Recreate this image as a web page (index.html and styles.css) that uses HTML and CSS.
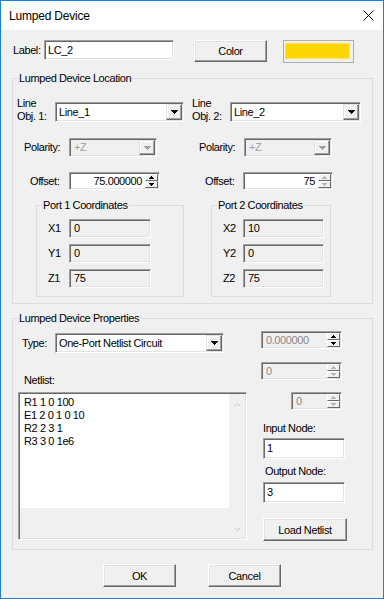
FILE: index.html
```html
<!DOCTYPE html>
<html>
<head>
<meta charset="utf-8">
<title>Lumped Device</title>
<link rel="stylesheet" href="styles.css">
</head>
<body>
<div class="window">
  <div class="titlebar">
    <span class="title">Lumped Device</span>
    <svg class="close" width="11" height="11" viewBox="0 0 11 11"><path d="M0.5 0.5L10.5 10.5M10.5 0.5L0.5 10.5" stroke="#000" stroke-width="1" fill="none"/></svg>
  </div>
  <div class="body">
    <div class="row-top">
      <span class="lbl lbl-label">Label:</span>
      <div class="edit edit-label">LC_2</div>
      <div class="btn btn-color">Color</div>
      <div class="swatch"><div class="swatch-fill"></div></div>
    </div>

    <fieldset class="group group-loc">
      <legend>Lumped Device Location</legend>
      <div class="loc-inner">
        <div class="row row-line">
          <span class="lbl2 lbl-obj1">Line<br>Obj. 1:</span>
          <div class="combo combo-obj1">
            <span class="combo-text">Line_1</span>
            <span class="combo-btn"><svg width="7" height="4" viewBox="0 0 7 4"><path d="M0 0H7V1H6V2H5V3H4V4H3V3H2V2H1V1H0Z" fill="#000"/></svg></span>
          </div>
          <span class="lbl2 lbl-obj2">Line<br>Obj. 2:</span>
          <div class="combo combo-obj2">
            <span class="combo-text">Line_2</span>
            <span class="combo-btn"><svg width="7" height="4" viewBox="0 0 7 4"><path d="M0 0H7V1H6V2H5V3H4V4H3V3H2V2H1V1H0Z" fill="#000"/></svg></span>
          </div>
        </div>

        <div class="row row-pol">
          <span class="lbl lbl-pol1">Polarity:</span>
          <div class="combo combo-dis combo-pol">
            <span class="combo-text">+Z</span>
            <span class="combo-btn"><svg width="7" height="4" viewBox="0 0 7 4"><path d="M0 0H7V1H6V2H5V3H4V4H3V3H2V2H1V1H0Z" fill="#a0a0a0"/></svg></span>
          </div>
          <span class="lbl lbl-pol2">Polarity:</span>
          <div class="combo combo-dis combo-pol">
            <span class="combo-text">+Z</span>
            <span class="combo-btn"><svg width="7" height="4" viewBox="0 0 7 4"><path d="M0 0H7V1H6V2H5V3H4V4H3V3H2V2H1V1H0Z" fill="#a0a0a0"/></svg></span>
          </div>
        </div>

        <div class="row row-off">
          <span class="lbl lbl-off1">Offset:</span>
          <div class="spin spin-off1">
            <span class="spin-text">75.000000</span>
            <span class="spin-btns">
              <span class="sb"><svg width="5" height="3" viewBox="0 0 5 3"><path d="M2 0H3V1H4V2H5V3H0V2H1V1H2Z" fill="#000"/></svg></span>
              <span class="sb"><svg width="5" height="3" viewBox="0 0 5 3"><path d="M0 0H5V1H4V2H3V3H2V2H1V1H0Z" fill="#000"/></svg></span>
            </span>
          </div>
          <span class="lbl lbl-off2">Offset:</span>
          <div class="spin spin-off2">
            <span class="spin-text">75</span>
            <span class="spin-btns">
              <span class="sb"><svg width="5" height="3" viewBox="0 0 5 3"><path d="M2 0H3V1H4V2H5V3H0V2H1V1H2Z" fill="#b4b4b4"/></svg></span>
              <span class="sb"><svg width="5" height="3" viewBox="0 0 5 3"><path d="M0 0H5V1H4V2H3V3H2V2H1V1H0Z" fill="#b4b4b4"/></svg></span>
            </span>
          </div>
        </div>

        <div class="row row-ports">
          <fieldset class="group port port1">
            <legend>Port 1 Coordinates</legend>
            <div class="port-inner">
              <div class="prow"><span class="lbl plbl">X1</span><div class="ro ro1">0</div></div>
              <div class="prow"><span class="lbl plbl">Y1</span><div class="ro ro1">0</div></div>
              <div class="prow"><span class="lbl plbl">Z1</span><div class="ro ro1">75</div></div>
            </div>
          </fieldset>
          <fieldset class="group port port2">
            <legend>Port 2 Coordinates</legend>
            <div class="port-inner">
              <div class="prow"><span class="lbl plbl">X2</span><div class="ro ro2">10</div></div>
              <div class="prow"><span class="lbl plbl">Y2</span><div class="ro ro2">0</div></div>
              <div class="prow"><span class="lbl plbl">Z2</span><div class="ro ro2">75</div></div>
            </div>
          </fieldset>
        </div>
      </div>
    </fieldset>

    <fieldset class="group group-props">
      <legend>Lumped Device Properties</legend>
      <div class="props-inner">
        <div class="props-left">
          <div class="row row-type">
            <span class="lbl lbl-type">Type:</span>
            <div class="combo combo-type">
              <span class="combo-text">One-Port Netlist Circuit</span>
              <span class="combo-btn"><svg width="7" height="4" viewBox="0 0 7 4"><path d="M0 0H7V1H6V2H5V3H4V4H3V3H2V2H1V1H0Z" fill="#000"/></svg></span>
            </div>
          </div>
          <div class="lbl lbl-netlist">Netlist:</div>
          <div class="netlist">
            <div class="net-main">
              <div class="net-white">R1 1 0 100<br>E1 2 0 1 0 10<br>R2 2 3 1<br>R3 3 0 1e6</div>
            </div>
            <div class="net-scroll">
              <svg width="7" height="4" viewBox="0 0 7 4"><path d="M0.5 3.5L3.5 0.5L6.5 3.5" stroke="#c8c8c8" fill="none"/></svg>
              <svg width="7" height="4" viewBox="0 0 7 4"><path d="M0.5 0.5L3.5 3.5L6.5 0.5" stroke="#c8c8c8" fill="none"/></svg>
            </div>
          </div>
        </div>
        <div class="props-right">
          <div class="spin spin-dis spin-r1">
            <span class="spin-text spin-left">0.000000</span>
            <span class="spin-btns">
              <span class="sb"><svg width="5" height="3" viewBox="0 0 5 3"><path d="M2 0H3V1H4V2H5V3H0V2H1V1H2Z" fill="#000"/></svg></span>
              <span class="sb"><svg width="5" height="3" viewBox="0 0 5 3"><path d="M0 0H5V1H4V2H3V3H2V2H1V1H0Z" fill="#000"/></svg></span>
            </span>
          </div>
          <div class="spin spin-dis spin-r2">
            <span class="spin-text spin-left">0</span>
            <span class="spin-btns">
              <span class="sb"><svg width="5" height="3" viewBox="0 0 5 3"><path d="M2 0H3V1H4V2H5V3H0V2H1V1H2Z" fill="#b4b4b4"/></svg></span>
              <span class="sb"><svg width="5" height="3" viewBox="0 0 5 3"><path d="M0 0H5V1H4V2H3V3H2V2H1V1H0Z" fill="#b4b4b4"/></svg></span>
            </span>
          </div>
          <div class="spin spin-dis spin-r3">
            <span class="spin-text spin-left">0</span>
            <span class="spin-btns">
              <span class="sb"><svg width="5" height="3" viewBox="0 0 5 3"><path d="M2 0H3V1H4V2H5V3H0V2H1V1H2Z" fill="#b4b4b4"/></svg></span>
              <span class="sb"><svg width="5" height="3" viewBox="0 0 5 3"><path d="M0 0H5V1H4V2H3V3H2V2H1V1H0Z" fill="#b4b4b4"/></svg></span>
            </span>
          </div>
          <div class="lbl lbl-in">Input Node:</div>
          <div class="edit edit-node edit-in">1</div>
          <div class="lbl lbl-out">Output Node:</div>
          <div class="edit edit-node edit-out">3</div>
          <div class="btn btn-load">Load Netlist</div>
        </div>
      </div>
    </fieldset>

    <div class="row-buttons">
      <div class="btn btn-dlg btn-ok">OK</div>
      <div class="btn btn-dlg btn-cancel">Cancel</div>
    </div>
  </div>
</div>
</body>
</html>
```

FILE: styles.css
```css
* { box-sizing: border-box; }
html, body { margin: 0; padding: 0; }
body {
  width: 384px;
  height: 599px;
  overflow: hidden;
  background: #f0f0f0;
  font-family: "Liberation Sans", Arial, sans-serif;
  font-size: 11px;
  letter-spacing: -0.4px;
  color: #000;
}
.window {
  width: 384px;
  height: 599px;
  border: 1px solid #1c7fd9;
  background: #f0f0f0;
  display: flex;
  flex-direction: column;
}
.titlebar {
  flex: none;
  height: 29px;
  background: #fff;
  display: flex;
  align-items: center;
  justify-content: space-between;
  padding: 0 9px 0 8px;
}
.title { font-size: 12px; letter-spacing: -0.2px; margin-top: 1px; }
.close { display: block; }
.body { flex: 1; display: flex; flex-direction: column; }

/* generic */
.lbl { display: block; white-space: nowrap; line-height: 13px; }
.row { display: flex; align-items: flex-start; }

.edit {
  background: #fff;
  border-top: 1px solid #a0a0a0;
  border-left: 1px solid #a0a0a0;
  border-right: 1px solid #fff;
  border-bottom: 1px solid #fff;
  box-shadow: inset 1px 1px 0 #696969, inset -1px -1px 0 #e3e3e3;
  padding-left: 3px;
  white-space: nowrap;
}
.btn {
  background: #f0f0f0;
  border-top: 1px solid #fff;
  border-left: 1px solid #fff;
  border-right: 1px solid #696969;
  border-bottom: 1px solid #696969;
  box-shadow: inset -1px -1px 0 #a0a0a0, inset 1px 1px 0 #e3e3e3;
  display: flex;
  align-items: center;
  justify-content: center;
}

/* top row */
.row-top {
  display: flex;
  align-items: flex-start;
  margin-top: 10px;
  padding-left: 12px;
  height: 23px;
  flex: none;
}
.lbl-label { width: 31px; line-height: 20px; }
.edit-label { width: 130px; height: 20px; line-height: 18px; }
.btn-color { margin-left: 20px; width: 73px; height: 22px; }
.swatch {
  margin-left: 16px;
  width: 71px;
  height: 23px;
  border: 1px solid #adadad;
  padding: 2px 3px 3px 1px;
  background: #f0f0f0;
}
.swatch-fill { width: 100%; height: 100%; background: #ffd700; border: 1px solid #ffe14d; }

/* group boxes */
.group {
  margin: 0;
  padding: 0;
  min-width: 0;
  border: 1px solid #dcdcdc;
}
.group > legend {
  margin-left: 5px;
  padding: 0 1px;
  line-height: 13px;
  font-size: 11px;
}
.group-loc { margin: 9px 0 0 11px; width: 361px; flex: none; }
.loc-inner { padding: 12px 0 6px 0; }

.lbl2 { display: block; line-height: 13px; white-space: nowrap; }
.row-line { height: 26px; padding-left: 4px; }
.lbl-obj1 { width: 38px; }
.lbl-obj2 { width: 38px; margin-left: 8px; }

.combo {
  display: flex;
  height: 20px;
  margin-top: 5px;
  background: #fff;
  border-top: 1px solid #a0a0a0;
  border-left: 1px solid #a0a0a0;
  border-right: 1px solid #fff;
  border-bottom: 1px solid #fff;
  box-shadow: inset 1px 1px 0 #696969, inset -1px -1px 0 #e3e3e3;
  padding: 1px;
}
.combo-obj1 { width: 129px; }
.combo-obj2 { width: 131px; }
.combo-text { flex: 1; padding-left: 2px; line-height: 16px; white-space: nowrap; overflow: hidden; }
.combo-btn {
  width: 16px;
  background: #f0f0f0;
  border-top: 1px solid #e3e3e3;
  border-left: 1px solid #e3e3e3;
  border-right: 1px solid #696969;
  border-bottom: 1px solid #696969;
  box-shadow: inset -1px -1px 0 #a0a0a0, inset 1px 1px 0 #fff;
  display: flex;
  align-items: center;
  justify-content: center;
}
.combo-btn svg { display: block; }
.combo-dis { background: #f0f0f0; color: #a0a0a0; }

.row-pol { margin-top: 15px; height: 19px; padding-left: 11px; }
.row-pol .lbl { line-height: 19px; }
.lbl-pol1 { width: 45px; }
.lbl-pol2 { width: 45px; margin-left: 42px; }
.combo-pol { width: 88px; height: 19px; margin-top: 0; }
.combo-pol .combo-text { line-height: 15px; padding-left: 3px; }

.row-off { margin-top: 15px; height: 18px; padding-left: 17px; }
.row-off .lbl { line-height: 18px; }
.lbl-off1 { width: 39px; }
.lbl-off2 { width: 38px; margin-left: 45px; }

.spin {
  display: flex;
  height: 18px;
  background: #fff;
  border-top: 1px solid #a0a0a0;
  border-left: 1px solid #a0a0a0;
  border-right: 1px solid #fff;
  border-bottom: 1px solid #fff;
  box-shadow: inset 1px 1px 0 #696969, inset -1px -1px 0 #e3e3e3;
  padding: 1px 1px 1px 1px;
}
.spin-text { flex: 1; text-align: right; padding-right: 3px; line-height: 14px; white-space: nowrap; }
.spin-left { text-align: left; padding-left: 3px; }
.spin-btns { width: 13px; display: flex; flex-direction: column; }
.sb {
  flex: 1;
  background: #f0f0f0;
  border-top: 1px solid #fff;
  border-left: 1px solid #fff;
  border-right: 1px solid #696969;
  border-bottom: 1px solid #696969;
  display: flex;
  align-items: center;
  justify-content: center;
}
.sb svg { display: block; }
.spin-off1 { width: 91px; }
.spin-off2 { width: 90px; }
.spin-dis { background: #f0f0f0; color: #8a8a8a; }

.row-ports { margin-top: 9px; }
.port { flex: none; }
.port1 { margin-left: 23px; width: 148px; }
.port2 { margin-left: 27px; width: 120px; }
.port-inner { padding: 7px 0 8px 11px; display: flex; flex-direction: column; gap: 6px; }
.prow { display: flex; align-items: center; height: 19px; }
.plbl { width: 21px; line-height: 19px; }
.port2 .plbl { width: 20px; }
.ro {
  height: 19px;
  line-height: 17px;
  background: #f0f0f0;
  border-top: 1px solid #a0a0a0;
  border-left: 1px solid #a0a0a0;
  border-right: 1px solid #fff;
  border-bottom: 1px solid #fff;
  box-shadow: inset 1px 1px 0 #696969, inset -1px -1px 0 #e3e3e3;
  padding-left: 4px;
}
.ro1 { width: 82px; }
.ro2 { width: 81px; }

/* properties */
.group-props { margin: 8px 0 0 11px; width: 361px; flex: none; }
.props-inner { display: flex; padding: 0 0 8px 0; }
.props-left { width: 234px; flex: none; }
.row-type { margin-top: 8px; height: 20px; padding-left: 9px; }
.lbl-type { width: 33px; line-height: 20px; }
.combo-type { width: 169px; margin-top: 0; }
.lbl-netlist { margin: 21px 0 0 11px; }
.netlist {
  margin: 5px 0 0 5px;
  width: 229px;
  height: 148px;
  display: flex;
  background: #f0f0f0;
  border-top: 1px solid #a0a0a0;
  border-left: 1px solid #a0a0a0;
  border-right: 1px solid #fff;
  border-bottom: 1px solid #fff;
  box-shadow: inset 1px 1px 0 #696969, inset -1px -1px 0 #e3e3e3;
  padding: 1px;
}
.net-main { flex: 1; }
.net-white {
  background: #fff;
  height: 114px;
  padding: 2px 0 0 4px;
  line-height: 13px;
}
.net-scroll {
  width: 16px;
  background: #f0f0f0;
  display: flex;
  flex-direction: column;
  justify-content: space-between;
  align-items: center;
  padding: 9px 0 7px 0;
}
.net-scroll svg { display: block; }

.props-right { margin-left: 14px; display: flex; flex-direction: column; align-items: flex-start; }
.spin-r1 { width: 81px; height: 18px; margin-top: 6px; }
.spin-r2 { width: 81px; height: 18px; margin-top: 13px; }
.spin-r3 { width: 51px; height: 18px; margin-top: 12px; margin-left: 30px; }
.lbl-in { margin: 12px 0 0 2px; }
.edit-node { width: 82px; height: 21px; line-height: 19px; margin-left: 2px; }
.edit-in { margin-top: 3px; }
.lbl-out { margin: 6px 0 0 4px; }
.edit-out { margin-top: 4px; }
.btn-load { width: 84px; height: 23px; margin: 15px 0 0 2px; }

/* dialog buttons */
.row-buttons { display: flex; margin-top: 14px; padding-left: 102px; }
.btn-dlg { width: 73px; height: 23px; }
.btn-cancel { margin-left: 32px; }
```
